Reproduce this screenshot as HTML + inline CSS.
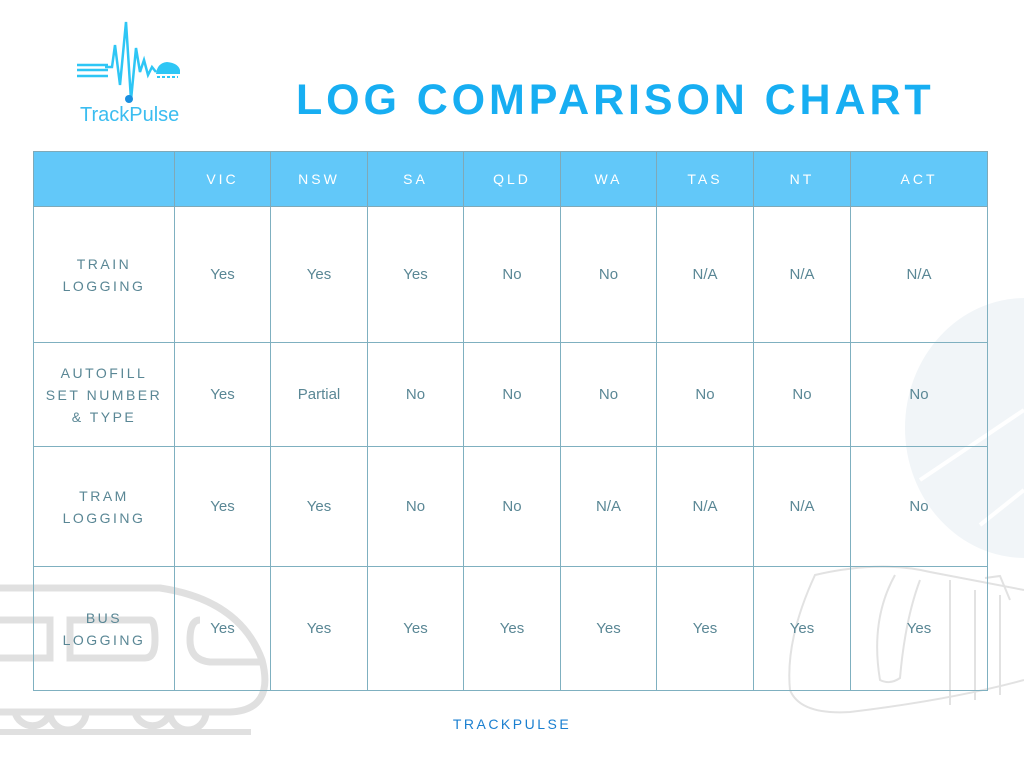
<!DOCTYPE html>
<html><head><meta charset="utf-8"><style>
body{margin:0;width:1024px;height:768px;background:#fff;position:relative;overflow:hidden;font-family:"Liberation Sans",sans-serif}
.abs{position:absolute}
table{position:absolute;left:33px;top:151px;border-collapse:collapse;table-layout:fixed}
td{border:1px solid #7fb0c0;text-align:center;color:#5a8795;font-size:15px;padding:0}
tr.h td{background:#62c8f9;color:#fff;letter-spacing:3px;font-size:14px;border-color:#7fa9b8}
td.l{letter-spacing:2.5px;font-size:14px;line-height:22px}
.title{left:296px;top:76px;font-size:43px;font-weight:bold;color:#17aef2;letter-spacing:3.9px;white-space:nowrap}
</style></head><body>
<div class="abs" style="left:905px;top:298px;width:240px;height:260px;border-radius:50%;background:#f1f5f8"></div>
<svg class="abs" style="left:0;top:0" width="1024" height="768">
 <g stroke="#fff" stroke-width="4"><line x1="920" y1="480" x2="1024" y2="410"/><line x1="980" y1="525" x2="1024" y2="490"/></g>
 <g fill="none" stroke="#e0e0e0" stroke-width="7">
  <path d="M0 588 H160 Q240 600 262 660 Q275 710 230 712 H0"/>
  <path d="M0 620 H50 V658 H0"/>
  <path d="M70 620 H150 Q155 620 155 640 Q155 658 145 658 H70 Z"/>
  <path d="M200 620 Q190 620 190 640 Q190 660 210 662 H260"/>
  <path d="M15 712 A18 18 0 0 0 50 712 A18 18 0 0 0 86 712"/>
  <path d="M135 712 A18 18 0 0 0 170 712 A18 18 0 0 0 206 712"/>
 </g>
 <rect x="0" y="729" width="251" height="6" fill="#e0e0e0"/>
 <g fill="none" stroke="#e2e2e2" stroke-width="2">
  <path d="M790 690 Q785 640 815 575 Q880 560 930 572 L1024 590"/>
  <path d="M790 690 Q800 715 850 712 Q950 700 1024 680"/>
  <path d="M895 575 Q870 620 880 680 Q890 685 900 678 Q905 620 920 580"/>
  <path d="M950 580 L950 705 M975 590 L975 700 M1000 595 L1000 695"/>
  <path d="M985 578 L1000 576 L1010 600"/>
 </g>
 <g stroke="#2ec6f5" stroke-width="2.5" fill="none">
  <line x1="77" y1="65" x2="108" y2="65"/><line x1="77" y1="70" x2="108" y2="70"/><line x1="77" y1="76" x2="108" y2="76"/>
  <path d="M105 67 L112 67 L115 45 L120 85 L126 22 L131 100 L136 48 L140 72 L144 60 L148 75 L152 67 L156 72"/>
 </g>
 <circle cx="129" cy="99" r="4" fill="#1a8fe0"/>
 <path d="M156 74 Q157 63 167 62 Q178 63 180 70 L180 74 Z" fill="#2ec6f5"/>
 <line x1="157" y1="77" x2="178" y2="77" stroke="#2ec6f5" stroke-width="2" stroke-dasharray="3 2"/>
</svg>
<div class="abs" style="left:80px;top:104px;font-size:20px;color:#3bbdf0;">TrackPulse</div>
<div class="abs title">LOG COMPARISON CHART</div>
<table>
<colgroup><col style="width:141px"><col style="width:96px"><col style="width:97px"><col style="width:96px"><col style="width:97px"><col style="width:96px"><col style="width:97px"><col style="width:97px"><col style="width:137px"></colgroup>
<tr class="h" style="height:55px"><td></td><td>VIC</td><td>NSW</td><td>SA</td><td>QLD</td><td>WA</td><td>TAS</td><td>NT</td><td>ACT</td></tr>
<tr style="height:136px"><td class="l">TRAIN<br>LOGGING</td><td>Yes</td><td>Yes</td><td>Yes</td><td>No</td><td>No</td><td>N/A</td><td>N/A</td><td>N/A</td></tr>
<tr style="height:104px"><td class="l">AUTOFILL<br>SET NUMBER<br>&amp; TYPE</td><td>Yes</td><td>Partial</td><td>No</td><td>No</td><td>No</td><td>No</td><td>No</td><td>No</td></tr>
<tr style="height:120px"><td class="l">TRAM<br>LOGGING</td><td>Yes</td><td>Yes</td><td>No</td><td>No</td><td>N/A</td><td>N/A</td><td>N/A</td><td>No</td></tr>
<tr style="height:124px"><td class="l">BUS<br>LOGGING</td><td>Yes</td><td>Yes</td><td>Yes</td><td>Yes</td><td>Yes</td><td>Yes</td><td>Yes</td><td>Yes</td></tr>
</table>
<div class="abs" style="left:0;width:1024px;top:716px;text-align:center;font-size:14px;letter-spacing:2.5px;color:#1a7fd0">TRACKPULSE</div>
</body></html>
